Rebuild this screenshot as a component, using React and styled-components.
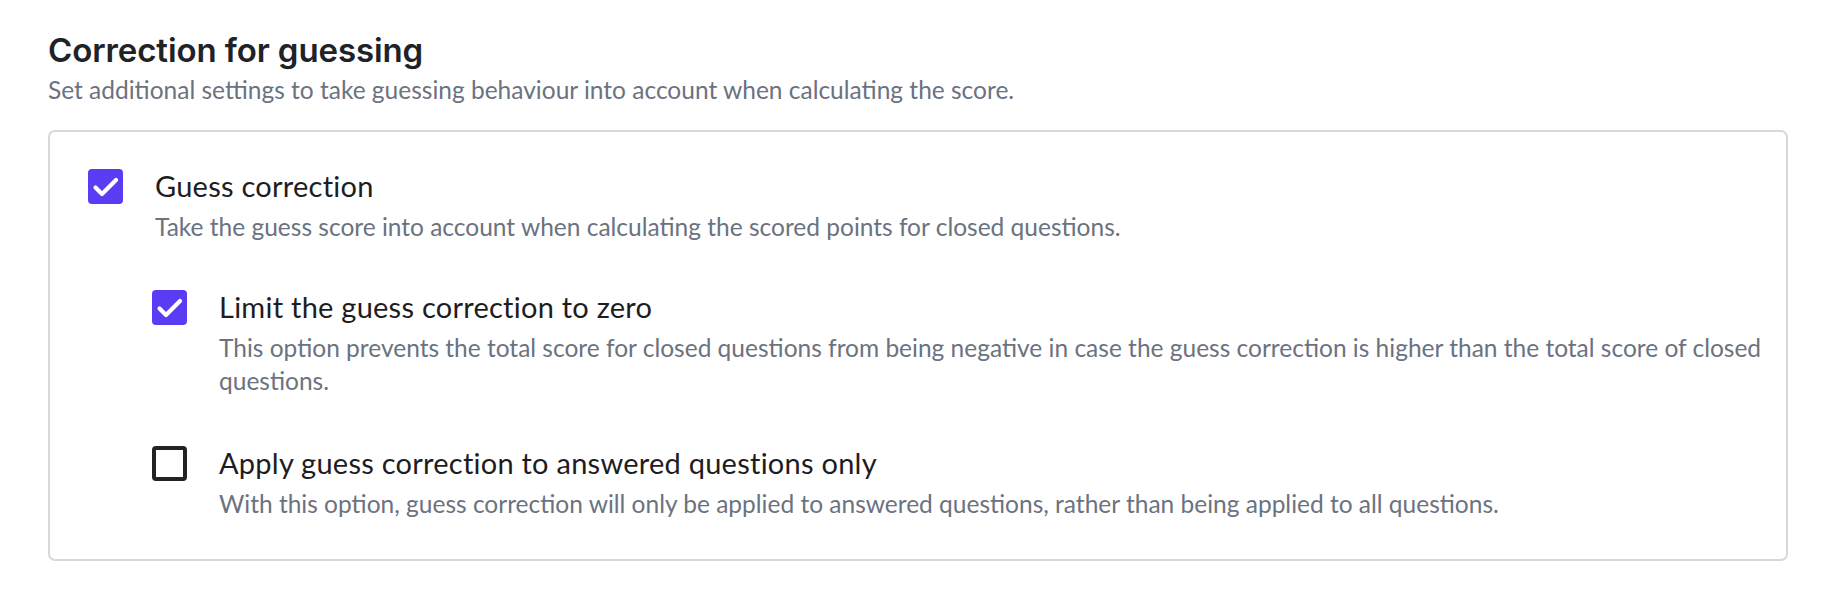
import React from 'react';
import styled, { createGlobalStyle } from 'styled-components';

const GlobalStyle = createGlobalStyle`
  body {
    margin: 0;
    background: #ffffff;
    font-family: "Lato", "Noto Sans", sans-serif;
    -webkit-font-smoothing: antialiased;
  }
`;

const Page = styled.div`
  padding: 30px 52px 0 48px;
`;

const Title = styled.h2`
  margin: 0;
  font-family: "Inter", "Lato", sans-serif;
  font-weight: 600;
  font-size: 33px;
  line-height: 40px;
  letter-spacing: -0.1px;
  color: #1f2227;
`;

const Subtitle = styled.p`
  margin: 4px 0 0;
  font-size: 24.5px;
  line-height: 32px;
  color: #6b7280;
`;

const Card = styled.div`
  margin-top: 24px;
  border: 2px solid #d5d8dd;
  border-radius: 7px;
  padding: 36px 20px 39px 38px;
`;

const Option = styled.div`
  display: flex;
  flex-direction: column;
`;

const Row = styled.label`
  display: flex;
  align-items: center;
  gap: 32px;
  height: 36px;
  cursor: pointer;
`;

const Box = styled.span`
  flex: none;
  box-sizing: border-box;
  width: 35px;
  height: 35px;
  border-radius: 4px;
  display: flex;
  align-items: center;
  justify-content: center;
  background: ${(p) => (p.$checked ? '#5a3cf5' : '#ffffff')};
  border: ${(p) => (p.$checked ? 'none' : '4px solid #232323')};
`;

const Label = styled.span`
  font-size: 29px;
  line-height: 36px;
  letter-spacing: 0.25px;
  color: #1d1d1f;
`;

const Description = styled.p`
  margin: 6px 0 0 67px;
  font-size: 24.5px;
  line-height: 33px;
  color: #6b7280;
`;

const SubOptions = styled.div`
  display: flex;
  flex-direction: column;
  gap: 48px;
  margin: 46px 0 0 64px;
`;

const Check = () => (
  <svg width="35" height="35" viewBox="0 0 35 35" fill="none">
    <polyline
      points="7.5,18.5 14,25 28,11"
      stroke="#ffffff"
      strokeWidth="4.2"
      strokeLinecap="round"
      strokeLinejoin="round"
    />
  </svg>
);

const Checkbox = ({ checked }) => (
  <Box $checked={checked}>{checked && <Check />}</Box>
);

const CheckOption = ({ checked, label, description }) => (
  <Option>
    <Row>
      <Checkbox checked={checked} />
      <Label>{label}</Label>
    </Row>
    <Description>{description}</Description>
  </Option>
);

const subOptions = [
  {
    checked: true,
    label: 'Limit the guess correction to zero',
    description:
      'This option prevents the total score for closed questions from being negative in case the guess correction is higher than the total score of closed questions.',
  },
  {
    checked: false,
    label: 'Apply guess correction to answered questions only',
    description:
      'With this option, guess correction will only be applied to answered questions, rather than being applied to all questions.',
  },
];

export default function App() {
  return (
    <>
      <GlobalStyle />
      <Page>
        <Title>Correction for guessing</Title>
        <Subtitle>
          Set additional settings to take guessing behaviour into account when calculating the score.
        </Subtitle>
        <Card>
          <CheckOption
            checked
            label="Guess correction"
            description="Take the guess score into account when calculating the scored points for closed questions."
          />
          <SubOptions>
            {subOptions.map((o) => (
              <CheckOption key={o.label} {...o} />
            ))}
          </SubOptions>
        </Card>
      </Page>
    </>
  );
}
